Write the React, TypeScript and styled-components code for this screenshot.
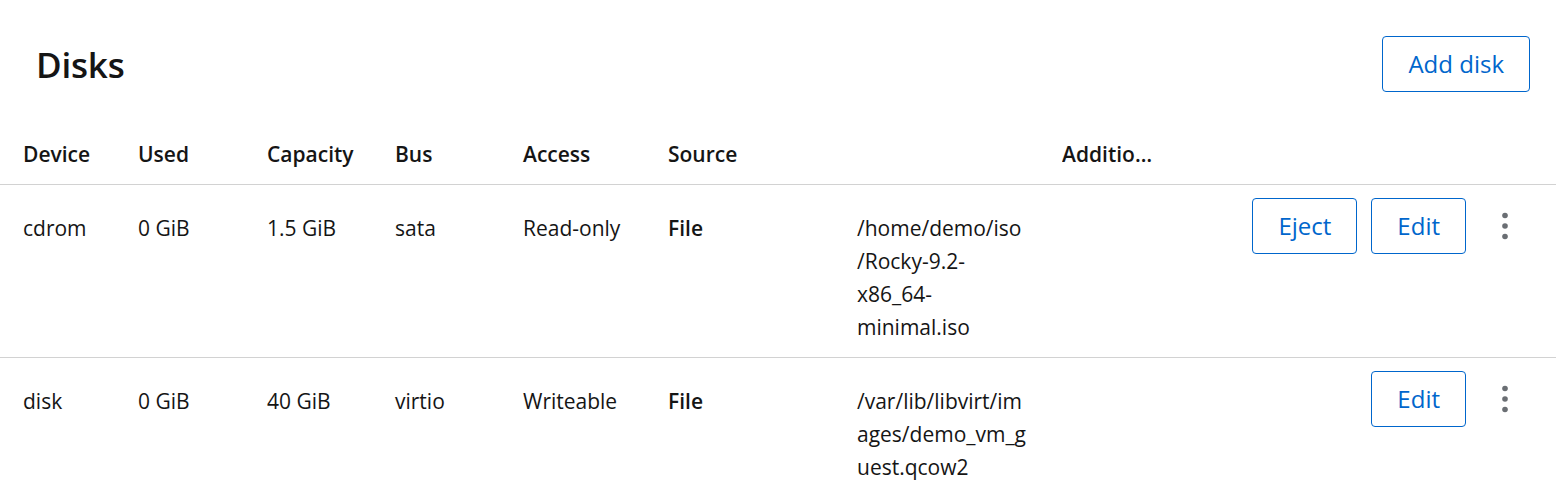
import styled, { createGlobalStyle } from "styled-components";

const GlobalStyle = createGlobalStyle`
  body {
    margin: 0;
    background: #fff;
    color: #151515;
    font-family: "Open Sans", "Liberation Sans", sans-serif;
  }
`;

const Card = styled.section`
  width: 1556px;
`;

const CardHeader = styled.header`
  display: flex;
  justify-content: space-between;
  align-items: center;
  padding: 36px 26px 0 36px;
`;

const Title = styled.h2`
  margin: 0;
  font-size: 35px;
  font-weight: 600;
  letter-spacing: -0.2px;
`;

const Button = styled.button`
  font-family: inherit;
  font-size: 24px;
  line-height: 34px;
  color: #0066cc;
  background: #fff;
  border: 1px solid #0066cc;
  border-radius: 4px;
  padding: 10px 25px;
  cursor: pointer;
`;

const columns = "115px 129px 128px 128px 145px 394px 1fr auto";

const HeadRow = styled.div`
  display: grid;
  grid-template-columns: ${columns};
  padding: 46px 26px 13px 23px;
  border-bottom: 1px solid #d2d2d2;
  font-size: 21px;
  font-weight: 600;
  line-height: 33px;
`;

const Row = styled.div`
  display: grid;
  grid-template-columns: ${columns};
  padding: 0 26px 0 23px;
  border-bottom: 1px solid #d2d2d2;
  font-size: 21px;
  line-height: 33px;
`;

const Cell = styled.div`
  padding: 27px 0 13px;
`;

const Truncated = styled.div`
  width: 96px;
  white-space: nowrap;
  overflow: hidden;
  text-overflow: ellipsis;
`;

const Source = styled.div`
  display: grid;
  grid-template-columns: 189px 180px;
`;

const SourceType = styled.span`
  font-weight: 600;
`;

const PathLine = styled.span`
  display: block;
`;

const Actions = styled.div`
  display: flex;
  justify-content: flex-end;
  align-items: flex-start;
  gap: 14px;
  padding-top: 13px;
`;

const Kebab = styled.button`
  background: none;
  border: none;
  width: 50px;
  height: 56px;
  padding: 0;
  display: flex;
  align-items: center;
  justify-content: center;
  cursor: pointer;
`;

function KebabIcon() {
  return (
    <svg width="8" height="28" viewBox="0 0 8 28">
      <circle cx="4" cy="3.5" r="2.8" fill="#6a6e73" />
      <circle cx="4" cy="14" r="2.8" fill="#6a6e73" />
      <circle cx="4" cy="24.5" r="2.8" fill="#6a6e73" />
    </svg>
  );
}

interface IDisk {
  device: string;
  used: string;
  capacity: string;
  bus: string;
  access: string;
  path: string[];
  eject: boolean;
}

const disks: IDisk[] = [
  {
    device: "cdrom",
    used: "0 GiB",
    capacity: "1.5 GiB",
    bus: "sata",
    access: "Read-only",
    path: ["/home/demo/iso", "/Rocky-9.2-", "x86_64-", "minimal.iso"],
    eject: true,
  },
  {
    device: "disk",
    used: "0 GiB",
    capacity: "40 GiB",
    bus: "virtio",
    access: "Writeable",
    path: ["/var/lib/libvirt/im", "ages/demo_vm_g", "uest.qcow2"],
    eject: false,
  },
];

export default function App() {
  return (
    <Card>
      <GlobalStyle />
      <CardHeader>
        <Title>Disks</Title>
        <Button>Add disk</Button>
      </CardHeader>
      <HeadRow>
        <div>Device</div>
        <div>Used</div>
        <div>Capacity</div>
        <div>Bus</div>
        <div>Access</div>
        <div>Source</div>
        <Truncated>Additional</Truncated>
        <div />
      </HeadRow>
      {disks.map((disk) => (
        <Row key={disk.device}>
          <Cell>{disk.device}</Cell>
          <Cell>{disk.used}</Cell>
          <Cell>{disk.capacity}</Cell>
          <Cell>{disk.bus}</Cell>
          <Cell>{disk.access}</Cell>
          <Cell>
            <Source>
              <SourceType>File</SourceType>
              <div>
                {disk.path.map((line) => (
                  <PathLine key={line}>{line}</PathLine>
                ))}
              </div>
            </Source>
          </Cell>
          <Cell />
          <Actions>
            {disk.eject && <Button>Eject</Button>}
            <Button>Edit</Button>
            <Kebab aria-label="Actions">
              <KebabIcon />
            </Kebab>
          </Actions>
        </Row>
      ))}
    </Card>
  );
}
